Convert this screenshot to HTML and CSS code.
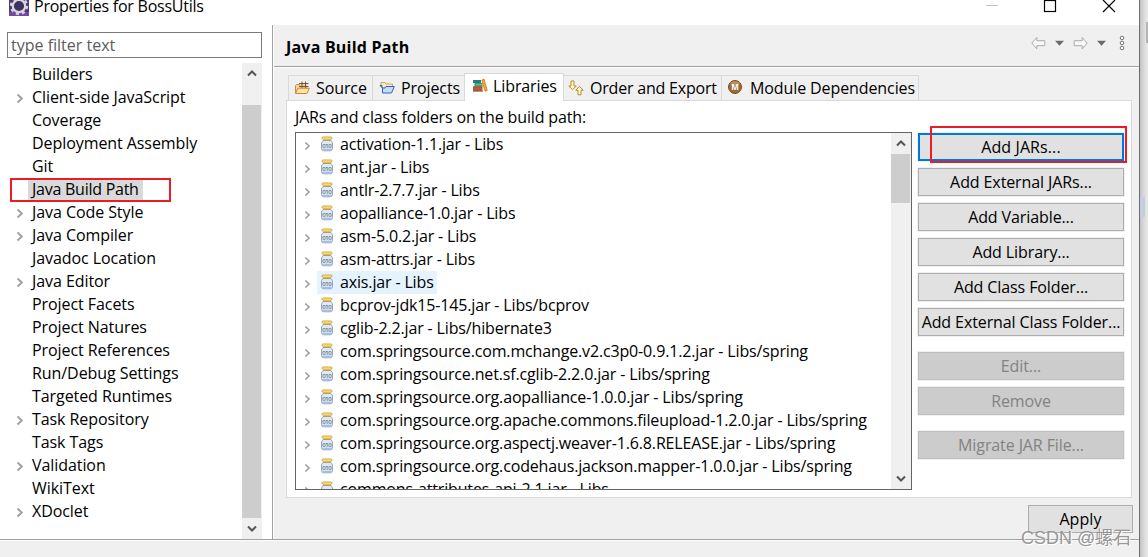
FILE: index.html
```html
<!DOCTYPE html>
<html lang="en">
<head>
    <meta charset="UTF-8">
    <title>Properties for BossUtils</title>
    <link rel="stylesheet" href="styles.css">
</head>
<body>

<!-- Shared icons -->
<svg class="defs" width="0" height="0">
    <symbol id="chevron" viewBox="0 0 8 10">
        <path d="M1.5 1 L5.8 5 L1.5 9" fill="none" stroke="#a0a0a0" stroke-width="1.9"/>
    </symbol>
    <symbol id="jar" viewBox="0 0 14 16">
        <path d="M3 4.5h8l1.5 2.300v5.700q0 2.300-2.300 2.300H3.800q-2.300 0-2.300-2.300V6.800z" fill="#dce9f7" stroke="#8fa7c8"/>
        <path d="M2.500 13.500h9" stroke="#a9bfe0" stroke-width="1.500"/>
        <rect x="2" y="1" width="10" height="2.200" rx="1" fill="#fbe9a0" stroke="#d6a72c"/>
        <path d="M3.500 4.400h7" stroke="#c79a3c"/>
        <text class="bits" x="7" y="11.600" text-anchor="middle" font-size="6" textLength="9.500" fill="#2c3644">010</text>
    </symbol>
    <symbol id="up" viewBox="0 0 10 7">
        <path d="M1 5.500 L5 1.500 L9 5.500" fill="none" stroke="#555" stroke-width="2"/>
    </symbol>
    <symbol id="down" viewBox="0 0 10 7">
        <path d="M1 1.500 L5 5.500 L9 1.500" fill="none" stroke="#555" stroke-width="2"/>
    </symbol>
</svg>

<div class="window">
    <header class="titlebar">
        <svg class="app-icon" width="20" height="21" viewBox="0 0 20 21">
            <rect width="20" height="21" fill="#4d3a78"/>
            <rect y="17" width="20" height="4" fill="#6f4aa0"/>
            <circle cx="10" cy="11" r="8" fill="none" stroke="#d5d2dc" stroke-width="2.400" stroke-dasharray="3.140 3.140"/>
            <circle cx="10" cy="11" r="6.200" fill="#3b3360" stroke="#d9d7df" stroke-width="2.200"/>
        </svg>
        <span class="title">Properties for BossUtils</span>
        <svg class="win-buttons" width="134" height="16" viewBox="0 0 134 16">
            <path d="M0 8.500h12" stroke="#c4c4c4"/>
            <rect x="58.500" y="3.500" width="11" height="11" fill="none" stroke="#000" stroke-width="1.200"/>
            <path d="M117 3l12 12M129 3l-12 12" stroke="#000" stroke-width="1.200"/>
        </svg>
    </header>

    <main class="content">
        <nav class="sidebar">
            <div class="filter">type filter text</div>
            <div class="tree-wrap">
                <ul class="tree">
                    <li><span>Builders</span></li>
                    <li><svg><use href="#chevron"/></svg><span>Client-side JavaScript</span></li>
                    <li><span>Coverage</span></li>
                    <li><span>Deployment Assembly</span></li>
                    <li><span>Git</span></li>
                    <li class="current"><span>Java Build Path</span><i class="mark mark-tree"></i></li>
                    <li><svg><use href="#chevron"/></svg><span>Java Code Style</span></li>
                    <li><svg><use href="#chevron"/></svg><span>Java Compiler</span></li>
                    <li><span>Javadoc Location</span></li>
                    <li><svg><use href="#chevron"/></svg><span>Java Editor</span></li>
                    <li><span>Project Facets</span></li>
                    <li><span>Project Natures</span></li>
                    <li><span>Project References</span></li>
                    <li><span>Run/Debug Settings</span></li>
                    <li><span>Targeted Runtimes</span></li>
                    <li><svg><use href="#chevron"/></svg><span>Task Repository</span></li>
                    <li><span>Task Tags</span></li>
                    <li><svg><use href="#chevron"/></svg><span>Validation</span></li>
                    <li><span>WikiText</span></li>
                    <li><svg><use href="#chevron"/></svg><span>XDoclet</span></li>
                </ul>
                <div class="scrollbar tree-scroll">
                    <svg class="arrow"><use href="#up"/></svg>
                    <div class="thumb"></div>
                    <svg class="arrow"><use href="#down"/></svg>
                </div>
            </div>
        </nav>

        <section class="page">
            <div class="page-head">
                <h1>Java Build Path</h1>
                <svg class="history" width="96" height="16" viewBox="0 0 96 16">
                    <g fill="#f7f7f7" stroke="#ababab" stroke-linejoin="round">
                        <path d="M.8 8l5-5.500v3.200h8v5h-8v3.200z"/>
                        <path d="M56.200 8l-5-5.500v3.200h-8v5h8v3.200z"/>
                    </g>
                    <path d="M24 5.800h9l-4.500 5zM66 5.800h9l-4.500 5z" fill="#6b6b6b"/>
                    <g fill="#fff" stroke="#777">
                        <circle cx="91" cy="3" r="1.800"/>
                        <circle cx="91" cy="8" r="1.800"/>
                        <circle cx="91" cy="13" r="1.800"/>
                    </g>
                </svg>
            </div>

            <div class="tabs">
                <div class="tab source">
                    <svg width="16" height="16" viewBox="0 0 16 16">
                        <path d="M1.500 13v-7.500l1-1h3l1 1.500h6v7z" fill="#f7d795" stroke="#c58a3c"/>
                        <rect x="6.500" y="3" width="7" height="5" fill="#ecd0a6"/>
                        <path d="M8 1.500v7M11.500 1.500v7M5 3.500h9.500M5 6.500h9.500" stroke="#75452d" stroke-width=".9"/>
                        <path d="M1.500 13.500l2.500-5.300h11.300l-2.300 5.300z" fill="#fde3a9" stroke="#c58a3c"/>
                    </svg>
                    <span>Source</span>
                </div>
                <div class="tab projects">
                    <svg width="16" height="16" viewBox="0 0 16 16">
                        <path d="M2 6.500V2.500h4l1 1.500h6.500v3" fill="#fbe9b6" stroke="#c9a566"/>
                        <path d="M1 5.500h2v2.500h3l1-1.500h8.300l-2.800 6.500H3.500v-5z" fill="#c3daf9" stroke="#3866ad" stroke-linejoin="round"/>
                    </svg>
                    <span>Projects</span>
                </div>
                <div class="tab libraries">
                    <svg width="16" height="16" viewBox="0 0 16 16">
                        <path d="M1 2h8v3H1z" fill="#1c7f96"/>
                        <path d="M2.500 5h8v3.500h-8z" fill="#3d9960"/>
                        <path d="M1 9h9.500v4H1z" fill="#b2603a"/>
                        <path d="M4 6.800h6" stroke="#9ed0a5" stroke-width=".8"/>
                        <path d="M1 8.700h9.500M1 13.200h10" stroke="#7a3d24" stroke-width=".8"/>
                        <path d="M9.800 2l2.200-1 3.300 11.500-2.300.7z" fill="#f5a72b" stroke="#c96e20" stroke-width=".7"/>
                    </svg>
                    <span>Libraries</span>
                </div>
                <div class="tab order">
                    <svg width="16" height="16" viewBox="0 0 16 16" fill="#fff7d5" stroke="#bd8d25" stroke-linejoin="round">
                        <path d="M3 1h3v5h2.200L4.500 9.700.8 6H3z"/>
                        <path d="M10 14.800h3v-4.500h2.200L11.500 6.300 7.800 10.300H10z"/>
                    </svg>
                    <span>Order and Export</span>
                </div>
                <div class="tab module">
                    <svg width="14" height="14" viewBox="0 0 14 14">
                        <circle cx="7" cy="7" r="6.500" fill="#9b6a35" stroke="#7c4e20"/>
                        <ellipse cx="7" cy="3.800" rx="4.500" ry="2.500" fill="#b98f62"/>
                        <text class="bits" x="7" y="9.800" text-anchor="middle" font-size="8" font-weight="bold" fill="#fff">M</text>
                    </svg>
                    <span>Module Dependencies</span>
                </div>
            </div>

            <div class="panel">
                <div class="lib-column">
                    <div class="label">JARs and class folders on the build path:</div>
                    <div class="jar-box">
                        <ul class="jars">
                            <li><svg class="chev"><use href="#chevron"/></svg><svg class="jar"><use href="#jar"/></svg><span>activation-1.1.jar - Libs</span></li>
                            <li><svg class="chev"><use href="#chevron"/></svg><svg class="jar"><use href="#jar"/></svg><span>ant.jar - Libs</span></li>
                            <li><svg class="chev"><use href="#chevron"/></svg><svg class="jar"><use href="#jar"/></svg><span>antlr-2.7.7.jar - Libs</span></li>
                            <li><svg class="chev"><use href="#chevron"/></svg><svg class="jar"><use href="#jar"/></svg><span>aopalliance-1.0.jar - Libs</span></li>
                            <li><svg class="chev"><use href="#chevron"/></svg><svg class="jar"><use href="#jar"/></svg><span>asm-5.0.2.jar - Libs</span></li>
                            <li><svg class="chev"><use href="#chevron"/></svg><svg class="jar"><use href="#jar"/></svg><span>asm-attrs.jar - Libs</span></li>
                            <li class="hover"><svg class="chev"><use href="#chevron"/></svg><svg class="jar"><use href="#jar"/></svg><span>axis.jar - Libs</span></li>
                            <li><svg class="chev"><use href="#chevron"/></svg><svg class="jar"><use href="#jar"/></svg><span>bcprov-jdk15-145.jar - Libs/bcprov</span></li>
                            <li><svg class="chev"><use href="#chevron"/></svg><svg class="jar"><use href="#jar"/></svg><span>cglib-2.2.jar - Libs/hibernate3</span></li>
                            <li><svg class="chev"><use href="#chevron"/></svg><svg class="jar"><use href="#jar"/></svg><span>com.springsource.com.mchange.v2.c3p0-0.9.1.2.jar - Libs/spring</span></li>
                            <li><svg class="chev"><use href="#chevron"/></svg><svg class="jar"><use href="#jar"/></svg><span>com.springsource.net.sf.cglib-2.2.0.jar - Libs/spring</span></li>
                            <li><svg class="chev"><use href="#chevron"/></svg><svg class="jar"><use href="#jar"/></svg><span>com.springsource.org.aopalliance-1.0.0.jar - Libs/spring</span></li>
                            <li><svg class="chev"><use href="#chevron"/></svg><svg class="jar"><use href="#jar"/></svg><span>com.springsource.org.apache.commons.fileupload-1.2.0.jar - Libs/spring</span></li>
                            <li><svg class="chev"><use href="#chevron"/></svg><svg class="jar"><use href="#jar"/></svg><span>com.springsource.org.aspectj.weaver-1.6.8.RELEASE.jar - Libs/spring</span></li>
                            <li><svg class="chev"><use href="#chevron"/></svg><svg class="jar"><use href="#jar"/></svg><span>com.springsource.org.codehaus.jackson.mapper-1.0.0.jar - Libs/spring</span></li>
                            <li><svg class="chev"><use href="#chevron"/></svg><svg class="jar"><use href="#jar"/></svg><span>commons-attributes-api-2.1.jar - Libs</span></li>
                        </ul>
                        <div class="scrollbar jar-scroll">
                            <svg class="arrow"><use href="#up"/></svg>
                            <div class="thumb"></div>
                            <svg class="arrow"><use href="#down"/></svg>
                        </div>
                    </div>
                </div>
                <div class="buttons">
                    <button class="default">Add JARs...<i class="mark mark-button"></i></button>
                    <button>Add External JARs...</button>
                    <button>Add Variable...</button>
                    <button>Add Library...</button>
                    <button>Add Class Folder...</button>
                    <button>Add External Class Folder...</button>
                    <button class="gap" disabled>Edit...</button>
                    <button disabled>Remove</button>
                    <button class="gap" disabled>Migrate JAR File...</button>
                </div>
            </div>

            <div class="apply-row">
                <button class="apply">Apply</button>
            </div>
        </section>
    </main>
    <footer class="bottom"></footer>
</div>
<aside class="backdrop">
    <div class="back-thumb"></div>
    <div class="back-sel"></div>
</aside>
<div class="watermark">CSDN @螺石</div>

</body>
</html>
```

FILE: styles.css
```css
* {
    box-sizing: border-box;
}
body {
    margin: 0;
    width: 1148px;
    height: 557px;
    overflow: hidden;
    display: flex;
    position: relative;
    font-family: "Open Sans", "Noto Sans CJK SC", sans-serif;
    font-size: 16px;
    color: #000;
    background: #e4e4e4;
}
.defs {
    position: absolute;
}
.bits {
    letter-spacing: 0;
}
ul {
    list-style: none;
    margin: 0;
    padding: 0;
}
span, .label, h1, button {
    white-space: nowrap;
}
.window {
    width: 1140px;
    height: 557px;
    display: flex;
    flex-direction: column;
    background: #f0f0f0;
    border-right: 1px solid #6b6b6b;
}

/* title bar */
.titlebar {
    height: 25px;
    display: flex;
    align-items: flex-start;
    background: #fff;
    padding: 0 19px 0 9px;
}
.app-icon {
    margin-top: -5px;
}
.title {
    margin-left: 5px;
    line-height: 20px;
    margin-top: -4px;
    letter-spacing: -0.25px;
}
.win-buttons {
    margin-left: auto;
    margin-top: -3px;
}

.content {
    height: 515px;
    display: flex;
    border-bottom: 1px solid #a0a0a0;
}
.bottom {
    flex: 1;
    border-top: 1px solid #fff;
}

/* left tree */
.sidebar {
    width: 273px;
    background: #fff;
    border-right: 1px solid #a0a0a0;
    padding-top: 7px;
}
.filter {
    width: 255px;
    height: 26px;
    margin-left: 7px;
    padding-left: 3px;
    border: 1px solid #7a7a7a;
    line-height: 24px;
    color: #5c5c5c;
}
.tree-wrap {
    display: flex;
    height: 476px;
    margin-top: 5px;
}
.tree {
    width: 242px;
    letter-spacing: -0.07px;
}
.tree li {
    position: relative;
    height: 23px;
    padding-left: 28px;
    display: flex;
    align-items: center;
}
.tree li svg {
    width: 8px;
    height: 11px;
    margin: 2px 4px 0 -12px;
}
.tree span {
    height: 20px;
    line-height: 19px;
    padding: 0 4px;
}
.tree .current span {
    background: #d9d9d9;
    letter-spacing: -0.25px;
}
.mark {
    position: absolute;
    border: 2px solid #ed1c24;
}
.mark-tree {
    left: 10px;
    top: 0;
    width: 161px;
    height: 24px;
}

/* scrollbars */
.scrollbar {
    width: 20px;
    background: #f0f0f0;
    display: flex;
    flex-direction: column;
}
.scrollbar .arrow {
    width: 10px;
    height: 7px;
    margin: 7px 5px;
    flex: none;
}
.thumb {
    width: 19px;
    background: #cdcdcd;
}
.tree-scroll .thumb {
    height: 413px;
    margin-top: 21px;
}
.jar-scroll .thumb {
    height: 49px;
    margin-bottom: auto;
}

/* right side */
.page {
    flex: 1;
    border-left: 1px solid #fff;
}
.page-head {
    height: 42px;
    display: flex;
    align-items: flex-start;
    justify-content: space-between;
    padding: 0 10px 0 12px;
    border-bottom: 1px solid #a0a0a0;
    box-shadow: 0 1px #fff;
}
.page-head h1 {
    margin: 12px 0 0;
    font-size: 16px;
    line-height: 20px;
    letter-spacing: 0.2px;
}
.history {
    margin-top: 10px;
    margin-right: 2px;
}
.tabs {
    height: 33px;
    display: flex;
    align-items: flex-end;
    padding-left: 14px;
    letter-spacing: -0.1px;
}
.tab {
    height: 25px;
    display: flex;
    align-items: center;
    border: 1px solid #d9d9d9;
    border-width: 1px 1px 0 0;
    padding-left: 5px;
}
.tab span {
    margin-left: 6px;
}
.source {
    width: 85px;
    border-left-width: 1px;
}
.projects {
    width: 91px;
    border-right: 0;
    padding-left: 6px;
}
.libraries {
    width: 100px;
    height: 28px;
    margin-bottom: -1px;
    padding-bottom: 3px;
    padding-left: 7px;
    border-left-width: 1px;
    background: #fff;
    z-index: 1;
}
.libraries span {
    margin-left: 5px;
}
.order {
    width: 158px;
    padding-left: 4px;
    letter-spacing: -0.2px;
}
.module {
    width: 197px;
    padding-left: 6px;
}
.module svg {
    margin-bottom: 3px;
}
.module span {
    margin-left: 8px;
}
.panel {
    width: 846px;
    height: 398px;
    margin-left: 12px;
    padding: 0 7px 0 8px;
    display: flex;
    justify-content: space-between;
    background: #fff;
    border: 1px solid #d9d9d9;
}
.label {
    height: 31px;
    line-height: 33px;
    letter-spacing: -0.15px;
}
.jar-box {
    width: 617px;
    height: 358px;
    display: flex;
    justify-content: space-between;
    overflow: hidden;
    border: 1px solid #646464;
    letter-spacing: -0.15px;
}
.jars li {
    height: 23px;
    display: flex;
    align-items: center;
    padding-left: 8px;
}
.chev {
    width: 7px;
    height: 10px;
    margin: 2px 6px 0 0;
}
.jar {
    width: 23px;
    height: 23px;
    padding: 3px 6px 4px 3px;
}
.jars span {
    line-height: 23px;
    padding-right: 3px;
}
.hover .jar, .hover span {
    background: #e5f3ff;
}
.buttons {
    width: 206px;
    padding-top: 32px;
    display: flex;
    flex-direction: column;
    gap: 7px;
}
button {
    position: relative;
    flex: none;
    height: 28px;
    padding: 0;
    font: inherit;
    letter-spacing: -0.1px;
    color: #000;
    background: #e1e1e1;
    border: 1px solid #adadad;
    border-radius: 0;
    box-shadow: 0 0 0 1px #f0f0f0;
}
button:disabled {
    color: #838383;
    background: #ccc;
    border-color: #bfbfbf;
}
.default {
    border: 2px solid #0078d7;
    letter-spacing: 0.1px;
}
.mark-button {
    left: 10px;
    top: -9px;
    width: 197px;
    height: 37px;
}
.gap {
    margin-top: 9px;
}
.apply-row {
    display: flex;
    justify-content: flex-end;
    padding: 7px 6px 0 0;
}
.apply {
    width: 105px;
    letter-spacing: 0.1px;
}

/* window behind the dialog */
.backdrop {
    width: 8px;
    background: linear-gradient(to right, #c4c4c4, #dedede 5px, #e8e8e8);
}
.back-thumb {
    width: 2px;
    height: 21px;
    margin: 22px 0 0 6px;
    background: #b5b5b5;
}
.back-sel {
    width: 5px;
    height: 20px;
    margin-top: 154px;
    background: #c3cfe0;
}
.watermark {
    position: absolute;
    left: 1021px;
    top: 525px;
    font-family: "Liberation Sans", "Noto Sans CJK SC", sans-serif;
    font-size: 18px;
    line-height: 26px;
    white-space: nowrap;
    color: rgba(140, 140, 140, 0.9);
    text-shadow: 1px 1px 0 #fff;
}
```
